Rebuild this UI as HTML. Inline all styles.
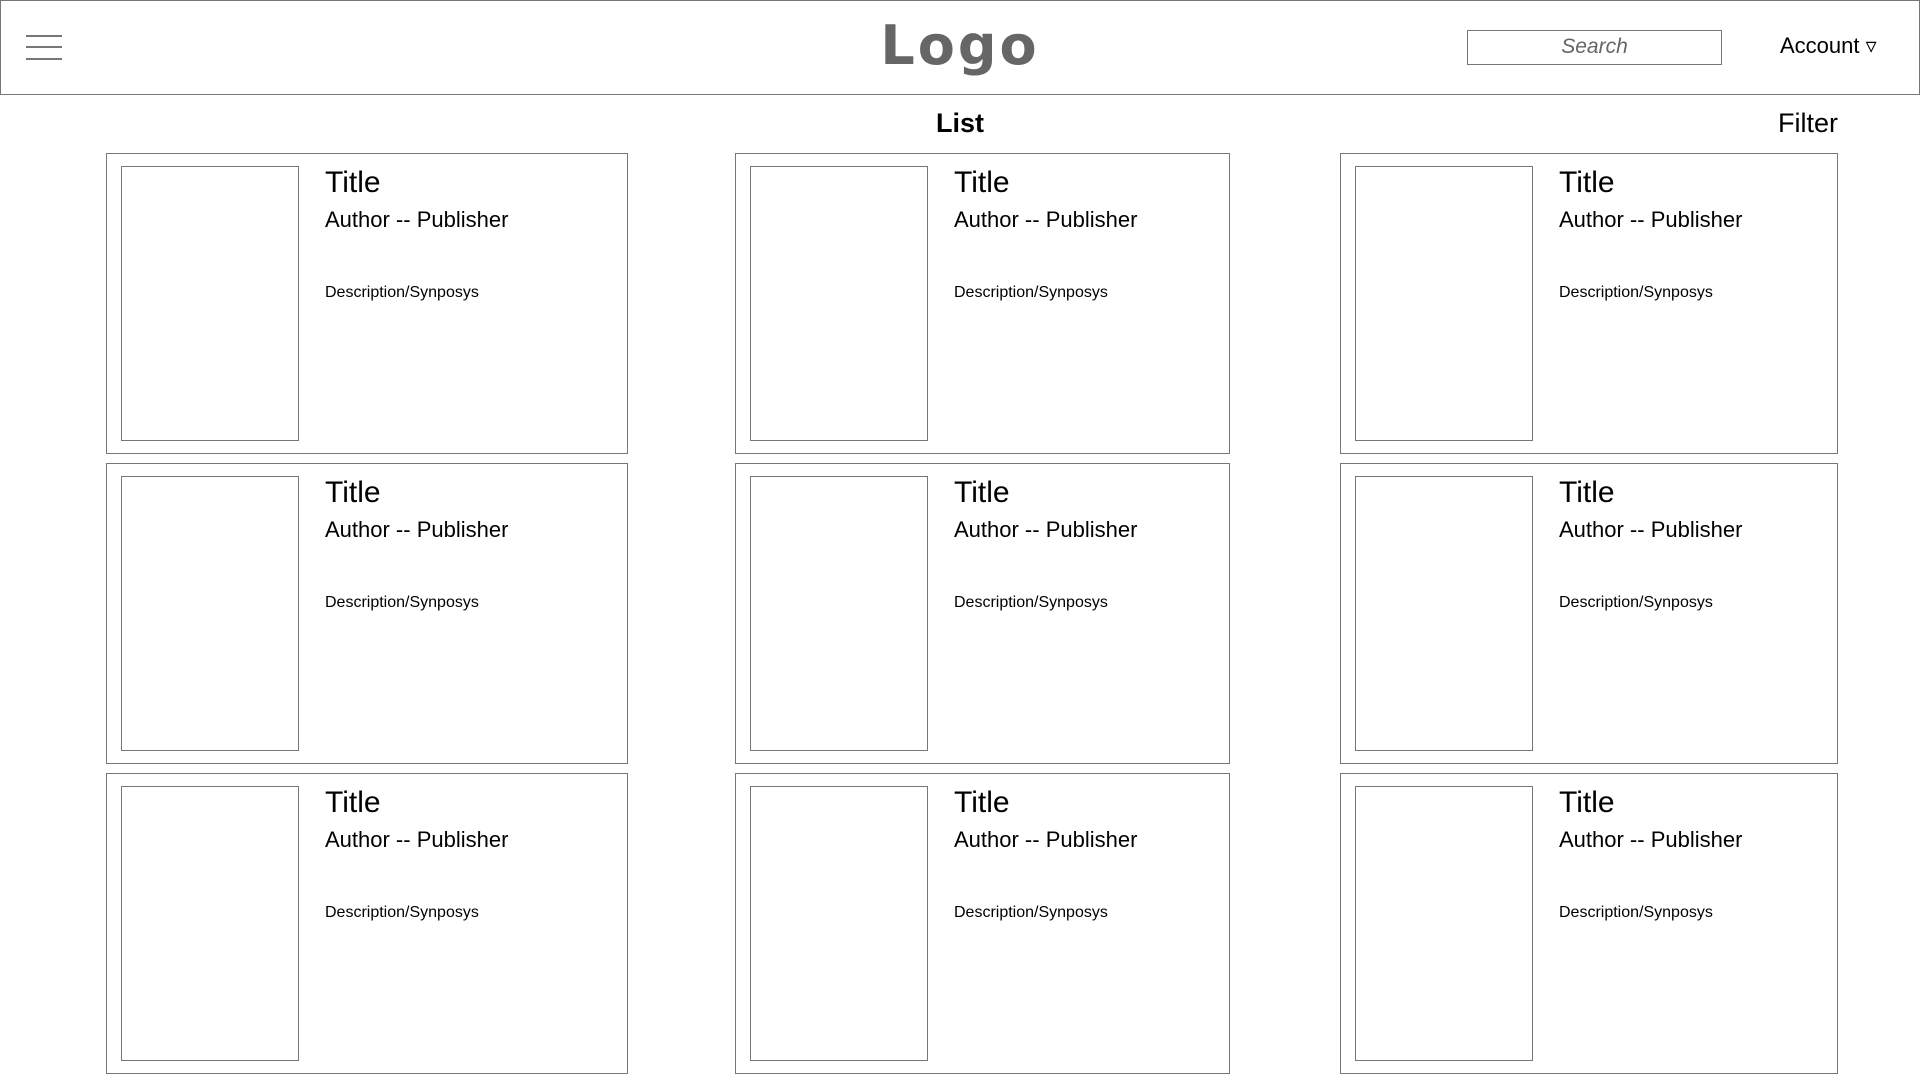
<!DOCTYPE html>
<html><head><meta charset="utf-8"><style>
*{margin:0;padding:0;box-sizing:border-box}
body{width:1920px;height:1080px;background:#fff;font-family:"Liberation Sans",sans-serif;position:relative;overflow:hidden;color:#000}
.hdr{position:absolute;left:0;top:0;width:1920px;height:95px;border:1.5px solid #777}
.hb{position:absolute;left:26px;width:36px;height:2px;background:#777}
.logo{position:absolute;left:0;width:1920px;top:14px;text-align:center;font-size:54px;font-weight:bold;color:#666;letter-spacing:3px;font-family:"DejaVu Sans",sans-serif}
.search{position:absolute;left:1467px;top:30px;width:255px;height:35px;border:1.5px solid #777;text-align:center;font-style:italic;color:#666;font-size:21px;line-height:32px}
.acct{position:absolute;left:1780px;top:33px;font-size:22px}
.list{position:absolute;left:0;width:1920px;text-align:center;top:108px;font-size:27px;font-weight:bold}
.filter{position:absolute;right:82px;top:108px;font-size:27px}
.card{position:absolute;border:1.5px solid #777;height:301px}
.img{position:absolute;left:14px;top:12px;width:178px;height:275px;border:1.5px solid #777}
.t{position:absolute;left:218px;top:12px;font-size:30px}
.a{position:absolute;left:218px;top:53px;font-size:22px}
.d{position:absolute;left:218px;top:130px;font-size:16px}
</style></head><body>
<div class="hdr"></div>
<div class="hb" style="top:35px"></div><div class="hb" style="top:46px"></div><div class="hb" style="top:58px"></div>
<div class="logo">Logo</div>
<div class="search">Search</div>
<div class="acct">Account ▿</div>
<div class="list">List</div>
<div class="filter">Filter</div>
<div class="card" style="left:106px;top:153px;width:522px"><div class="img"></div><div class="t">Title</div><div class="a">Author -- Publisher</div><div class="d">Description/Synposys</div></div>
<div class="card" style="left:735px;top:153px;width:495px"><div class="img"></div><div class="t">Title</div><div class="a">Author -- Publisher</div><div class="d">Description/Synposys</div></div>
<div class="card" style="left:1340px;top:153px;width:498px"><div class="img"></div><div class="t">Title</div><div class="a">Author -- Publisher</div><div class="d">Description/Synposys</div></div>
<div class="card" style="left:106px;top:463px;width:522px"><div class="img"></div><div class="t">Title</div><div class="a">Author -- Publisher</div><div class="d">Description/Synposys</div></div>
<div class="card" style="left:735px;top:463px;width:495px"><div class="img"></div><div class="t">Title</div><div class="a">Author -- Publisher</div><div class="d">Description/Synposys</div></div>
<div class="card" style="left:1340px;top:463px;width:498px"><div class="img"></div><div class="t">Title</div><div class="a">Author -- Publisher</div><div class="d">Description/Synposys</div></div>
<div class="card" style="left:106px;top:773px;width:522px"><div class="img"></div><div class="t">Title</div><div class="a">Author -- Publisher</div><div class="d">Description/Synposys</div></div>
<div class="card" style="left:735px;top:773px;width:495px"><div class="img"></div><div class="t">Title</div><div class="a">Author -- Publisher</div><div class="d">Description/Synposys</div></div>
<div class="card" style="left:1340px;top:773px;width:498px"><div class="img"></div><div class="t">Title</div><div class="a">Author -- Publisher</div><div class="d">Description/Synposys</div></div>
</body></html>
